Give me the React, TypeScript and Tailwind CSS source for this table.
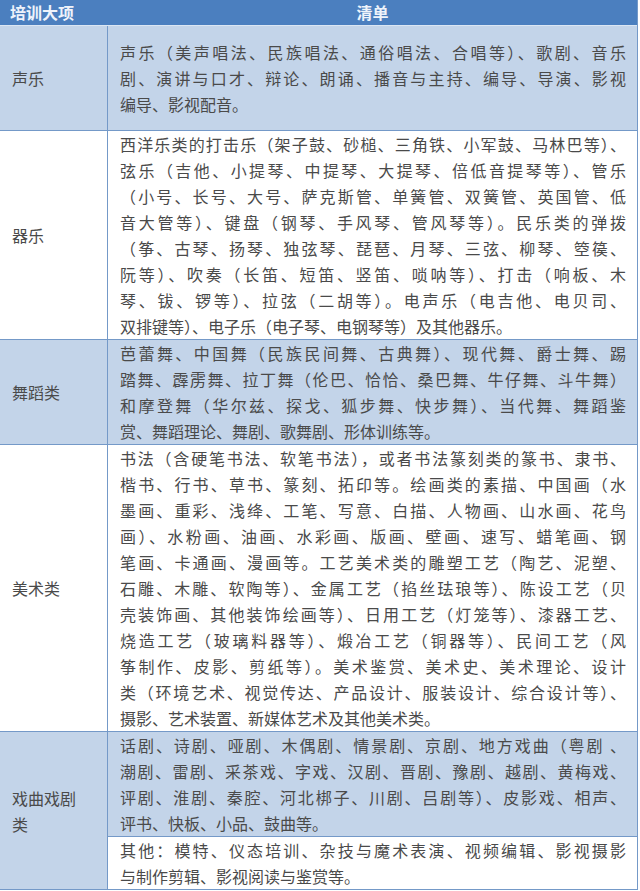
import React from 'react';

// 每一行手动断开，与原表格排版一致；除最后一行外两端对齐
interface Section {
  label: React.ReactNode;
  shaded: boolean;
  blocks: { lines: string[]; shaded: boolean; pad?: boolean }[];
}

const sections: Section[] = [
  {
    label: '声乐',
    shaded: true,
    blocks: [
      {
        shaded: true,
        pad: true,
        lines: [
          '声乐（美声唱法、民族唱法、通俗唱法、合唱等）、歌剧、音乐',
          '剧、演讲与口才、辩论、朗诵、播音与主持、编导、导演、影视',
          '编导、影视配音。',
        ],
      },
    ],
  },
  {
    label: '器乐',
    shaded: false,
    blocks: [
      {
        shaded: false,
        lines: [
          '西洋乐类的打击乐（架子鼓、砂槌、三角铁、小军鼓、马林巴等）、',
          '弦乐（吉他、小提琴、中提琴、大提琴、倍低音提琴等）、管乐',
          '（小号、长号、大号、萨克斯管、单簧管、双簧管、英国管、低',
          '音大管等）、键盘（钢琴、手风琴、管风琴等）。民乐类的弹拨',
          '（筝、古琴、扬琴、独弦琴、琵琶、月琴、三弦、柳琴、箜篌、',
          '阮等）、吹奏（长笛、短笛、竖笛、唢呐等）、打击（响板、木',
          '琴、钹、锣等）、拉弦（二胡等）。电声乐（电吉他、电贝司、',
          '双排键等）、电子乐（电子琴、电钢琴等）及其他器乐。',
        ],
      },
    ],
  },
  {
    label: '舞蹈类',
    shaded: true,
    blocks: [
      {
        shaded: true,
        lines: [
          '芭蕾舞、中国舞（民族民间舞、古典舞）、现代舞、爵士舞、踢',
          '踏舞、霹雳舞、拉丁舞（伦巴、恰恰、桑巴舞、牛仔舞、斗牛舞）',
          '和摩登舞（华尔兹、探戈、狐步舞、快步舞）、当代舞、舞蹈鉴',
          '赏、舞蹈理论、舞剧、歌舞剧、形体训练等。',
        ],
      },
    ],
  },
  {
    label: '美术类',
    shaded: false,
    blocks: [
      {
        shaded: false,
        lines: [
          '书法（含硬笔书法、软笔书法），或者书法篆刻类的篆书、隶书、',
          '楷书、行书、草书、篆刻、拓印等。绘画类的素描、中国画（水',
          '墨画、重彩、浅绛、工笔、写意、白描、人物画、山水画、花鸟',
          '画）、水粉画、油画、水彩画、版画、壁画、速写、蜡笔画、钢',
          '笔画、卡通画、漫画等。工艺美术类的雕塑工艺（陶艺、泥塑、',
          '石雕、木雕、软陶等）、金属工艺（掐丝珐琅等）、陈设工艺（贝',
          '壳装饰画、其他装饰绘画等）、日用工艺（灯笼等）、漆器工艺、',
          '烧造工艺（玻璃料器等）、煅冶工艺（铜器等）、民间工艺（风',
          '筝制作、皮影、剪纸等）。美术鉴赏、美术史、美术理论、设计',
          '类（环境艺术、视觉传达、产品设计、服装设计、综合设计等）、',
          '摄影、艺术装置、新媒体艺术及其他美术类。',
        ],
      },
    ],
  },
  {
    label: (
      <>
        戏曲戏剧
        <br />
        类
      </>
    ),
    shaded: true,
    blocks: [
      {
        shaded: true,
        lines: [
          '话剧、诗剧、哑剧、木偶剧、情景剧、京剧、地方戏曲（粤剧 、',
          '潮剧、雷剧、采茶戏、字戏、汉剧、晋剧、豫剧、越剧、黄梅戏、',
          '评剧、淮剧、秦腔、河北梆子、川剧、吕剧等）、皮影戏、相声、',
          '评书、快板、小品、鼓曲等。',
        ],
      },
      {
        shaded: false,
        lines: [
          '其他：模特、仪态培训、杂技与魔术表演、视频编辑、影视摄影',
          '与制作剪辑、影视阅读与鉴赏等。',
        ],
      },
    ],
  },
];

function Lines({ lines }: { lines: string[] }) {
  return (
    <>
      {lines.map((line, i) => (
        <div
          key={i}
          className={i < lines.length - 1 ? 'text-justify [text-align-last:justify]' : ''}
        >
          {line}
        </div>
      ))}
    </>
  );
}

export default function App() {
  return (
    <div className="w-[640px] h-[891px] bg-white font-['Noto_Sans_CJK_SC','Noto_Sans',sans-serif] text-[16px] leading-[26px] text-[#4a4a4a]">
      <div className="w-[638px] border-r border-b border-[#7499c8]">
        {/* 表头 */}
        <div className="grid grid-cols-[108px_1fr] h-[26px] bg-[#4b7fbf] border-b border-[#dbe6f3] text-[#eef3fb] font-bold leading-[25px]">
          <div className="pl-[10px]">培训大项</div>
          <div className="text-center">清单</div>
        </div>

        {sections.map((s, i) => (
          <div
            key={i}
            className={`grid grid-cols-[108px_1fr] ${i > 0 ? 'border-t border-[#7499c8]' : ''}`}
          >
            <div
              className={`flex items-center pl-[12px] border-r border-[#7499c8] ${
                s.shaded ? 'bg-[#c3d4e9]' : 'bg-white'
              }`}
            >
              <div>{s.label}</div>
            </div>
            <div className="flex flex-col">
              {s.blocks.map((b, j) => (
                <div
                  key={j}
                  className={`pl-[12px] pr-[11px] ${b.pad ? 'py-[13px]' : ''} ${
                    b.shaded ? 'bg-[#c3d4e9]' : 'bg-white'
                  } ${j > 0 ? 'border-t border-[#7499c8]' : ''}`}
                >
                  <Lines lines={b.lines} />
                </div>
              ))}
            </div>
          </div>
        ))}
      </div>
    </div>
  );
}
